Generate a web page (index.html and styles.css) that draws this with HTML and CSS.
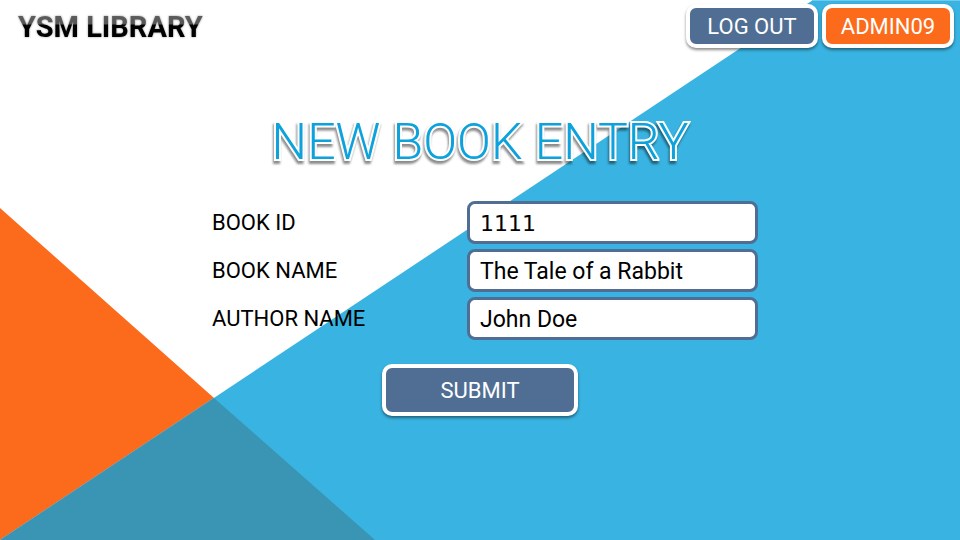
FILE: index.html
```html
<!DOCTYPE html>
<html lang="en">
<head>
  <meta charset="utf-8">
  <meta name="viewport" content="width=device-width, initial-scale=1">
  <title>YSM Library</title>
  <link rel="stylesheet" href="styles.css">
</head>
<body>
  <svg class="backdrop" viewBox="0 0 960 540" preserveAspectRatio="none" aria-hidden="true">
    <polygon class="orange" points="0,208 214,398 0,540"/>
    <polygon class="blue" points="0,540 813,0 960,0 960,540"/>
    <polygon class="teal" points="0,540 214,398 375,540"/>
    <rect class="edge" x="812" y="0" width="148" height="1"/>
  </svg>
  <header class="topbar">
    <a class="brand" href="#">YSM LIBRARY</a>
    <nav class="actions">
      <button class="btn" type="button">LOG OUT</button>
      <button class="btn btn-user" type="button">ADMIN09</button>
    </nav>
  </header>
  <main class="content">
    <h1 class="title">NEW BOOK ENTRY</h1>
    <form class="entry">
      <div class="row">
        <label for="book-id">BOOK ID</label>
        <input class="numeric" id="book-id" type="text" value="1111">
      </div>
      <div class="row">
        <label for="book-name">BOOK NAME</label>
        <input id="book-name" type="text" value="The Tale of a Rabbit">
      </div>
      <div class="row">
        <label for="author-name">AUTHOR NAME</label>
        <input id="author-name" type="text" value="John Doe">
      </div>
      <button class="btn btn-submit" type="submit">SUBMIT</button>
    </form>
  </main>
</body>
</html>
```
FILE: styles.css
```css
* {
  box-sizing: border-box;
}

body {
  margin: 0;
  min-height: 100vh;
  background: #fff;
  color: #000;
  font-family: Roboto, "Liberation Sans", sans-serif;
  font-size: 22px;
  line-height: 28px;
}

.backdrop {
  position: absolute;
  inset: 0;
  z-index: -1;
  width: 100%;
  height: 100%;
}

.orange { fill: #fb6b1b; }
.blue { fill: #39b3e1; }
.teal { fill: #3995b3; }
.edge { fill: #74c9ea; }

.topbar {
  display: flex;
  justify-content: space-between;
  align-items: flex-start;
  padding: 4px 6px 0 18px;
}

.brand {
  margin-top: 4px;
  font-size: 29px;
  line-height: 38px;
  font-weight: 700;
  text-decoration: none;
  color: transparent;
  background: linear-gradient(#666 0, #555 16px, #000 17px, #000 100%);
  background-clip: text;
  filter: drop-shadow(0 0 1px rgba(0, 0, 0, 0.4));
}

.actions {
  display: flex;
  gap: 4px;
}

.btn {
  min-width: 132px;
  height: 44px;
  padding: 2px 8px 0;
  border: 4px solid #fff;
  border-radius: 10px;
  background: #506e94;
  box-shadow: 0 2px 3px rgba(0, 0, 0, 0.45);
  color: #fff;
  font: inherit;
}

.btn-user {
  background: #fb6b1b;
}

.content {
  display: flex;
  flex-direction: column;
  align-items: center;
  padding: 64px 16px 24px;
}

.title {
  margin: 0;
  font-size: 50px;
  line-height: 60px;
  font-weight: 300;
  color: #0ea2dc;
  -webkit-text-stroke: 4px #fff;
  paint-order: stroke fill;
  filter: drop-shadow(-1px 3px 1px rgba(0, 0, 0, 0.45));
}

.entry {
  display: flex;
  flex-direction: column;
  gap: 5px;
  width: 100%;
  max-width: 556px;
  margin-top: 29px;
}

.row {
  display: grid;
  grid-template-columns: 265fr 291fr;
  align-items: center;
}

.row label {
  padding-left: 10px;
}

.row input {
  width: 100%;
  height: 43px;
  padding: 2px 10px 0;
  border: 3px solid #506e94;
  border-radius: 8px;
  background: #fff;
  color: #000;
  font: inherit;
  font-size: 23px;
}

.row .numeric {
  font-family: "DejaVu Sans", sans-serif;
  font-size: 22px;
}

.btn-submit {
  align-self: center;
  min-width: 196px;
  height: 52px;
  margin-top: 19px;
}
```
